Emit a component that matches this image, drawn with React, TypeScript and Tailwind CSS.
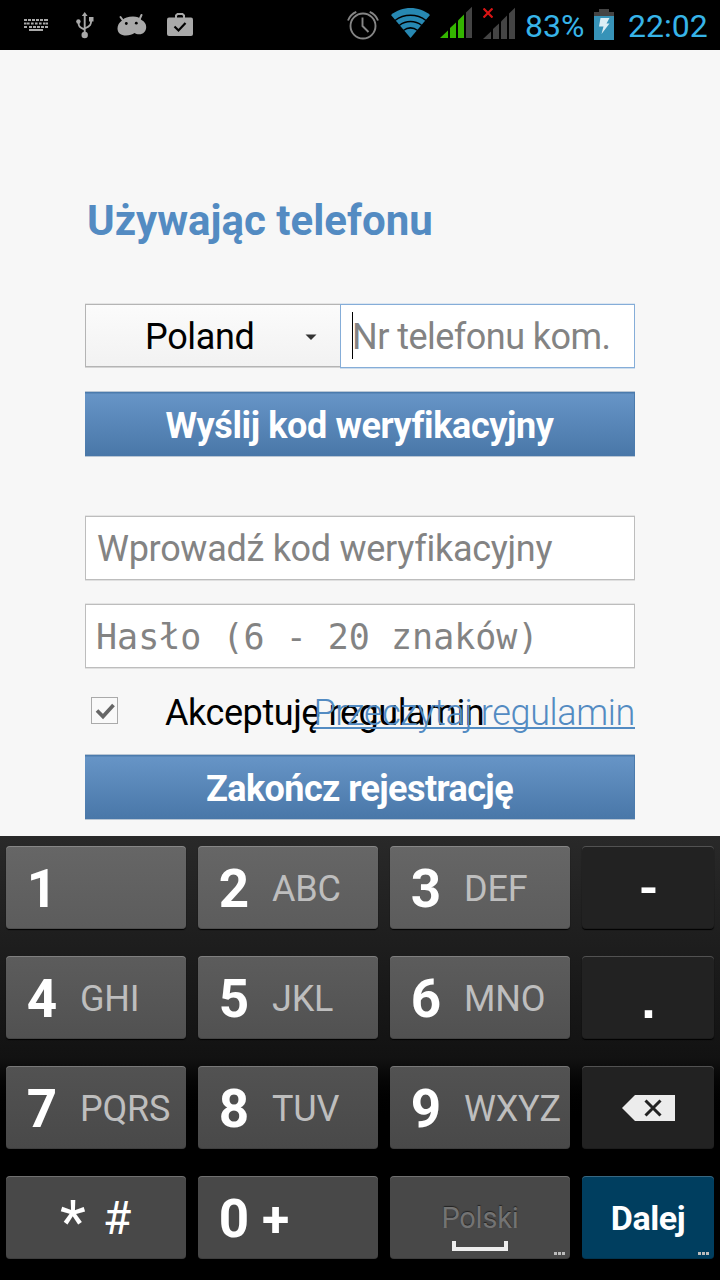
import type { ReactNode } from 'react';

function KeyboardIcon() {
  return (
    <svg className="h-[14px] w-[26px]" viewBox="0 0 26 14" fill="#a9a9a9">
      {[0, 4, 8, 12, 16, 20].map((x) => (
        <rect key={`a${x}`} x={x} y="1" width="3" height="2" />
      ))}
      <rect x="22" y="1" width="2" height="2" />
      {[0, 3, 7, 11, 15, 19].map((x) => (
        <rect key={`b${x}`} x={x} y="4.5" width="2.6" height="2" />
      ))}
      <rect x="22" y="4.5" width="2" height="2" />
      {[0, 5, 9, 13, 17, 21].map((x) => (
        <rect key={`c${x}`} x={x} y="8" width="3" height="2" />
      ))}
      <rect x="5" y="11" width="14" height="2" />
    </svg>
  );
}

function UsbIcon() {
  return (
    <svg className="h-[28px] w-[20px]" viewBox="0 0 20 28" fill="#a9a9a9" stroke="none">
      <path d="M9.7 0 12.6 4H6.8Z" />
      <path d="M9.7 3v20M9.7 17.500C4.500 15.500 3.500 14.500 3.500 10M9.700 16.500C15.500 14 16.200 12.500 16.200 8" fill="none" stroke="#a9a9a9" strokeWidth="1.900" />
      <rect x="14" y="5" width="4.500" height="4.500" />
      <circle cx="3.400" cy="9.500" r="2.200" />
      <circle cx="9.700" cy="23" r="3.200" />
    </svg>
  );
}

function DroidIcon() {
  return (
    <svg className="h-[24px] w-[30px]" viewBox="0 0 30 24" fill="#a9a9a9">
      <path d="M3.500 4 6 7.500M24.500 2 22.500 6.500" stroke="#a9a9a9" strokeWidth="2" strokeLinecap="round" />
      <path d="M5 7.500C7.500 4.500 11 3.500 16 3.500c4 0 6.500 1 8.500 3.500 3 1.500 4.700 4 4.700 7 0 4.500-3 7.300-7 7.300-2 0-3.500-.3-4.700-1.200-2 1.700-5 2.400-8.500 2.400-5 0-8.500-2.500-8.500-7 0-3.300 1.500-6 4.500-8Z" />
      <circle cx="9.300" cy="10.500" r="1.400" fill="#000" />
      <circle cx="19.300" cy="10.200" r="1.400" fill="#000" />
    </svg>
  );
}

function BriefcaseIcon() {
  return (
    <svg className="h-[24px] w-[26px]" viewBox="0 0 26 24">
      <path d="M9 6V3.500L10.500 2h5L17 3.500V6" fill="none" stroke="#a9a9a9" strokeWidth="2" />
      <rect x="0" y="5.500" width="26" height="18.500" rx="2" fill="#a9a9a9" />
      <path d="m7.500 14.500 4 4L18.500 11" fill="none" stroke="#000" strokeWidth="2.200" />
    </svg>
  );
}

function AlarmIcon() {
  return (
    <svg className="h-[32px] w-[32px]" viewBox="0 0 32 32" fill="none" stroke="#858585" strokeWidth="1.900">
      <circle cx="16" cy="18" r="12.500" />
      <path d="M15.500 9.500v8.500l6 6M1 12.500c1.500-4 4.300-7 8.300-8.700M31 12.500c-1.500-4-4.300-7-8.300-8.700" />
    </svg>
  );
}

function WifiIcon() {
  return (
    <svg className="h-[30px] w-[39px]" viewBox="0 0 39 30">
      <path d="M0 7C11-2.300 28-2.300 39 7L19.500 30Z" fill="#2788b2" />
      <path d="M4 12.500c9-7 22-7 31 0M8.200 17.500c6.700-5.200 15.900-5.200 22.600 0M12.300 22.500c4.400-3.200 10-3.200 14.400 0" fill="none" stroke="#000" strokeWidth="1.500" />
    </svg>
  );
}

function SignalBars({ active }: { active: boolean }) {
  const lit = active ? '#34b500' : '#444';
  return (
    <svg className="h-[32px] w-[33px]" viewBox="0 0 33 32">
      <path d="M0 32 8 24.500V32Z" fill={lit} />
      <path d="M10 22 16 16.500V32h-6Z" fill={lit} />
      <path d="M18 14.500 24 8.500V32h-6Z" fill={lit} />
      <path d="M26 6.500 32 .8V32h-6Z" fill="#444" />
    </svg>
  );
}

function BatteryIcon() {
  return (
    <svg className="h-[31px] w-[20px]" viewBox="0 0 20 31">
      <path d="M5 0h10v3h5v5H0V3h5Z" fill="#444" />
      <rect y="7" width="20" height="24" fill="#3793b8" />
      <path d="M6.500 9h9l-3 5.500h3L7.500 25l2-7.500H5Z" fill="#dceef5" />
    </svg>
  );
}

function StatusBar() {
  return (
    <header className="relative flex h-[50px] shrink-0 items-start bg-black text-[#37b4e8]">
      <div className="ml-6 mt-[18px]"><KeyboardIcon /></div>
      <div className="ml-[25px] mt-3"><UsbIcon /></div>
      <div className="ml-[22px] mt-[13px]"><DroidIcon /></div>
      <div className="ml-5 mt-3"><BriefcaseIcon /></div>
      <div className="ml-[154px] mt-2"><AlarmIcon /></div>
      <div className="ml-3 mt-2"><WifiIcon /></div>
      <div className="ml-[10px] mt-[6px]"><SignalBars active /></div>
      <div className="relative ml-[10px] mt-[7px]">
        <SignalBars active={false} />
        <svg className="absolute top-[1px] left-0 h-[10px] w-[10px]" viewBox="0 0 10 10" stroke="#d91414" strokeWidth="2.200">
          <path d="m.5.5 9 9M9.500.5l-9 9" />
        </svg>
      </div>
      <span className="ml-[9px] w-[68px] pt-[7px] text-[32px] leading-[38px] whitespace-nowrap">83%</span>
      <div className="ml-px mt-[9px]"><BatteryIcon /></div>
      <span className="ml-[14px] pt-[7px] text-[32px] leading-[38px] whitespace-nowrap">22:02</span>
    </header>
  );
}

function ActionButton({ children }: { children: ReactNode }) {
  return (
    <button className="flex h-[64px] w-full items-center justify-center border-t border-r border-[#4b7bad] bg-linear-to-b from-[#6795c7] to-[#4977a8] pt-[3px] text-[36px] leading-[42px] font-bold whitespace-nowrap text-white shadow-[0_-1px_0_#b9c6d4,0_1px_0_#b9c6d4,inset_0_1px_0_#5a88b9]">
      {children}
    </button>
  );
}

const fieldEdge = 'border border-[#bdbdbd] shadow-[0_-1px_0_#e4e4e4,0_1px_0_#e0e0e0]';

function RegistrationForm() {
  return (
    <main className="h-[786px] shrink-0 px-[85px] pt-[145px] text-[36px] leading-[42px] text-black">
      <h1 className="pl-[2px] text-[42px] leading-[52px] font-bold whitespace-nowrap text-[#538bc2]">Używając telefonu</h1>

      <div className="mt-[57px] flex h-[64px]">
        <div className="flex h-[63px] w-[255px] items-center border border-r-0 border-[#b4b4b4] bg-linear-to-b from-[#fbfbfb] to-[#f2f2f2] shadow-[0_-1px_0_#e4e4e4,0_1px_0_#d4d4d4]">
          <span className="ml-[59px] w-[160px] pt-[3px] tracking-[-0.35px]">Poland</span>
          <svg className="mt-[2px] h-[6px] w-[12px]" viewBox="0 0 12 6"><path d="M.5.5h11L6 6Z" fill="#333" /></svg>
        </div>
        <div className="flex h-[64px] w-[295px] items-center border border-[#85add8] bg-white text-[#838383] shadow-[0_-1px_0_#dce6f1,0_1px_0_#cddded]">
          <span className="mb-px ml-[11px] h-[47px] w-px bg-black" />
          <span className="-ml-px pt-[2px] tracking-[-0.53px] whitespace-nowrap">Nr telefonu kom.</span>
        </div>
      </div>

      <div className="mt-6 tracking-[-0.39px]"><ActionButton>Wyślij kod weryfikacyjny</ActionButton></div>

      <div className={`mt-[60px] flex h-[64px] items-center bg-white pt-[2px] pl-[11px] tracking-[-0.29px] whitespace-nowrap text-[#838383] ${fieldEdge}`}>
        Wprowadź kod weryfikacyjny
      </div>
      <div className={`mt-6 flex h-[64px] items-center bg-white pt-px pl-[10px] font-['DejaVu_Sans_Mono',monospace] text-[35px] whitespace-nowrap text-[#838383] ${fieldEdge}`}>
        Hasło (6 - 20 znaków)
      </div>

      <div className="relative mt-[23px] flex h-[42px] items-center">
        <div className="mb-[4px] ml-[6px] flex h-[27px] w-[27px] items-center justify-center border border-[#aaa] bg-[#f9f9f9]">
          <svg className="ml-px h-[19px] w-[21px]" viewBox="0 0 21 19"><path d="m2 9.500 6 6L18.500 4" fill="none" stroke="#666" strokeWidth="3.700" /></svg>
        </div>
        <span className="ml-[47px] pt-px tracking-[-0.43px] whitespace-nowrap">Akceptuję regulamin</span>
        <a className="absolute top-0 right-0 h-[38px] border-b-2 border-[#538bc2] pt-px font-light tracking-[-0.35px] whitespace-nowrap text-[#538bc2]">Przeczytaj regulamin</a>
      </div>

      <div className="mt-[22px] tracking-[-0.58px]"><ActionButton>Zakończ rejestrację</ActionButton></div>
    </main>
  );
}

const keyEdge = 'rounded-[4px] shadow-[inset_0_1px_0_rgba(255,255,255,0.22),inset_0_-1px_0_rgba(0,0,0,0.15),0_1px_1px_#000]';

function DigitKey({ digit, letters, tone }: { digit: string; letters: string; tone: string }) {
  return (
    <button className={`flex h-[83px] items-center ${keyEdge} ${tone}`}>
      <span className="ml-4 w-10 pt-[2px] text-center text-[53px] leading-[60px] font-bold">{digit}</span>
      <span className="ml-[18px] pt-[2px] text-[36px] leading-[42px] font-normal tracking-[-0.2px] whitespace-nowrap text-[#bebebe]">{letters}</span>
    </button>
  );
}

function SideKey({ children }: { children: ReactNode }) {
  return <button className={`flex h-[83px] items-center justify-center bg-[#222] ${keyEdge}`}>{children}</button>;
}

function MoreDots() {
  return (
    <span className="absolute right-[5px] bottom-1 flex gap-px">
      <i className="h-[3px] w-[3px] bg-[#bbb]" />
      <i className="h-[3px] w-[3px] bg-[#bbb]" />
      <i className="h-[3px] w-[3px] bg-[#bbb]" />
    </span>
  );
}

const row1 = 'bg-linear-to-b from-[#666] to-[#5c5c5c]';
const row2 = 'bg-linear-to-b from-[#5c5c5c] to-[#515151]';
const row3 = 'bg-linear-to-b from-[#525252] to-[#494949]';
const row4 = 'bg-[#484848]';

function Keypad() {
  return (
    <section className="grid h-[444px] shrink-0 grid-cols-[180px_180px_180px_132px] content-start gap-x-3 gap-y-[27px] bg-linear-to-b from-[#292929] via-[#121212] via-50% to-black to-65% px-[6px] pt-[10px] text-white">
      <DigitKey digit="1" letters="" tone={row1} />
      <DigitKey digit="2" letters="ABC" tone={row1} />
      <DigitKey digit="3" letters="DEF" tone={row1} />
      <SideKey><span className="pt-[3px] pl-px text-[50px] leading-[60px] font-bold">-</span></SideKey>

      <DigitKey digit="4" letters="GHI" tone={row2} />
      <DigitKey digit="5" letters="JKL" tone={row2} />
      <DigitKey digit="6" letters="MNO" tone={row2} />
      <SideKey><span className="pt-[5px] pl-px font-['Liberation_Sans',sans-serif] text-[52px] leading-[60px] font-bold">.</span></SideKey>

      <DigitKey digit="7" letters="PQRS" tone={row3} />
      <DigitKey digit="8" letters="TUV" tone={row3} />
      <DigitKey digit="9" letters="WXYZ" tone={row3} />
      <SideKey>
        <svg className="h-[26px] w-[53px]" viewBox="0 0 53 26">
          <path d="M0 13 13 0h40v26H13Z" fill="#ececec" />
          <path d="m23.500 5.500 15 15M38.500 5.500l-15 15" stroke="#222" strokeWidth="3" />
        </svg>
      </SideKey>

      <button className={`flex h-[83px] items-center ${keyEdge} ${row4}`}>
        <span className="ml-[54px] w-[43px] pt-[8px] text-left text-[60px] leading-[60px]">*</span>
        <span className="pt-px text-[46px] leading-[60px]">#</span>
      </button>
      <button className={`flex h-[83px] items-center font-bold ${keyEdge} ${row4}`}>
        <span className="ml-4 w-10 pt-[2px] text-center text-[53px] leading-[60px]">0</span>
        <span className="ml-2 pt-[4px] text-[50px] leading-[60px]">+</span>
      </button>
      <button className={`relative flex h-[83px] flex-col items-center ${keyEdge} ${row4}`}>
        <span className="mt-6 text-[29px] leading-[36px] tracking-[-0.2px] text-[#737373] [text-shadow:0_-1px_1px_#222]">Polski</span>
        <svg className="mt-[5px] h-[10px] w-[56px]" viewBox="0 0 56 10"><path d="M0 0h4v6h48V0h4v10H0Z" fill="#eee" /></svg>
        <MoreDots />
      </button>
      <button className={`relative flex h-[83px] items-center justify-center bg-[#003e5f] text-[34px] leading-[42px] font-bold tracking-[-0.4px] ${keyEdge}`}>
        Dalej
        <MoreDots />
      </button>
    </section>
  );
}

export default function App() {
  return (
    <div className="flex h-[1280px] w-[720px] flex-col overflow-hidden bg-[#f7f7f7] font-['Roboto',sans-serif]">
      <StatusBar />
      <RegistrationForm />
      <Keypad />
    </div>
  );
}
